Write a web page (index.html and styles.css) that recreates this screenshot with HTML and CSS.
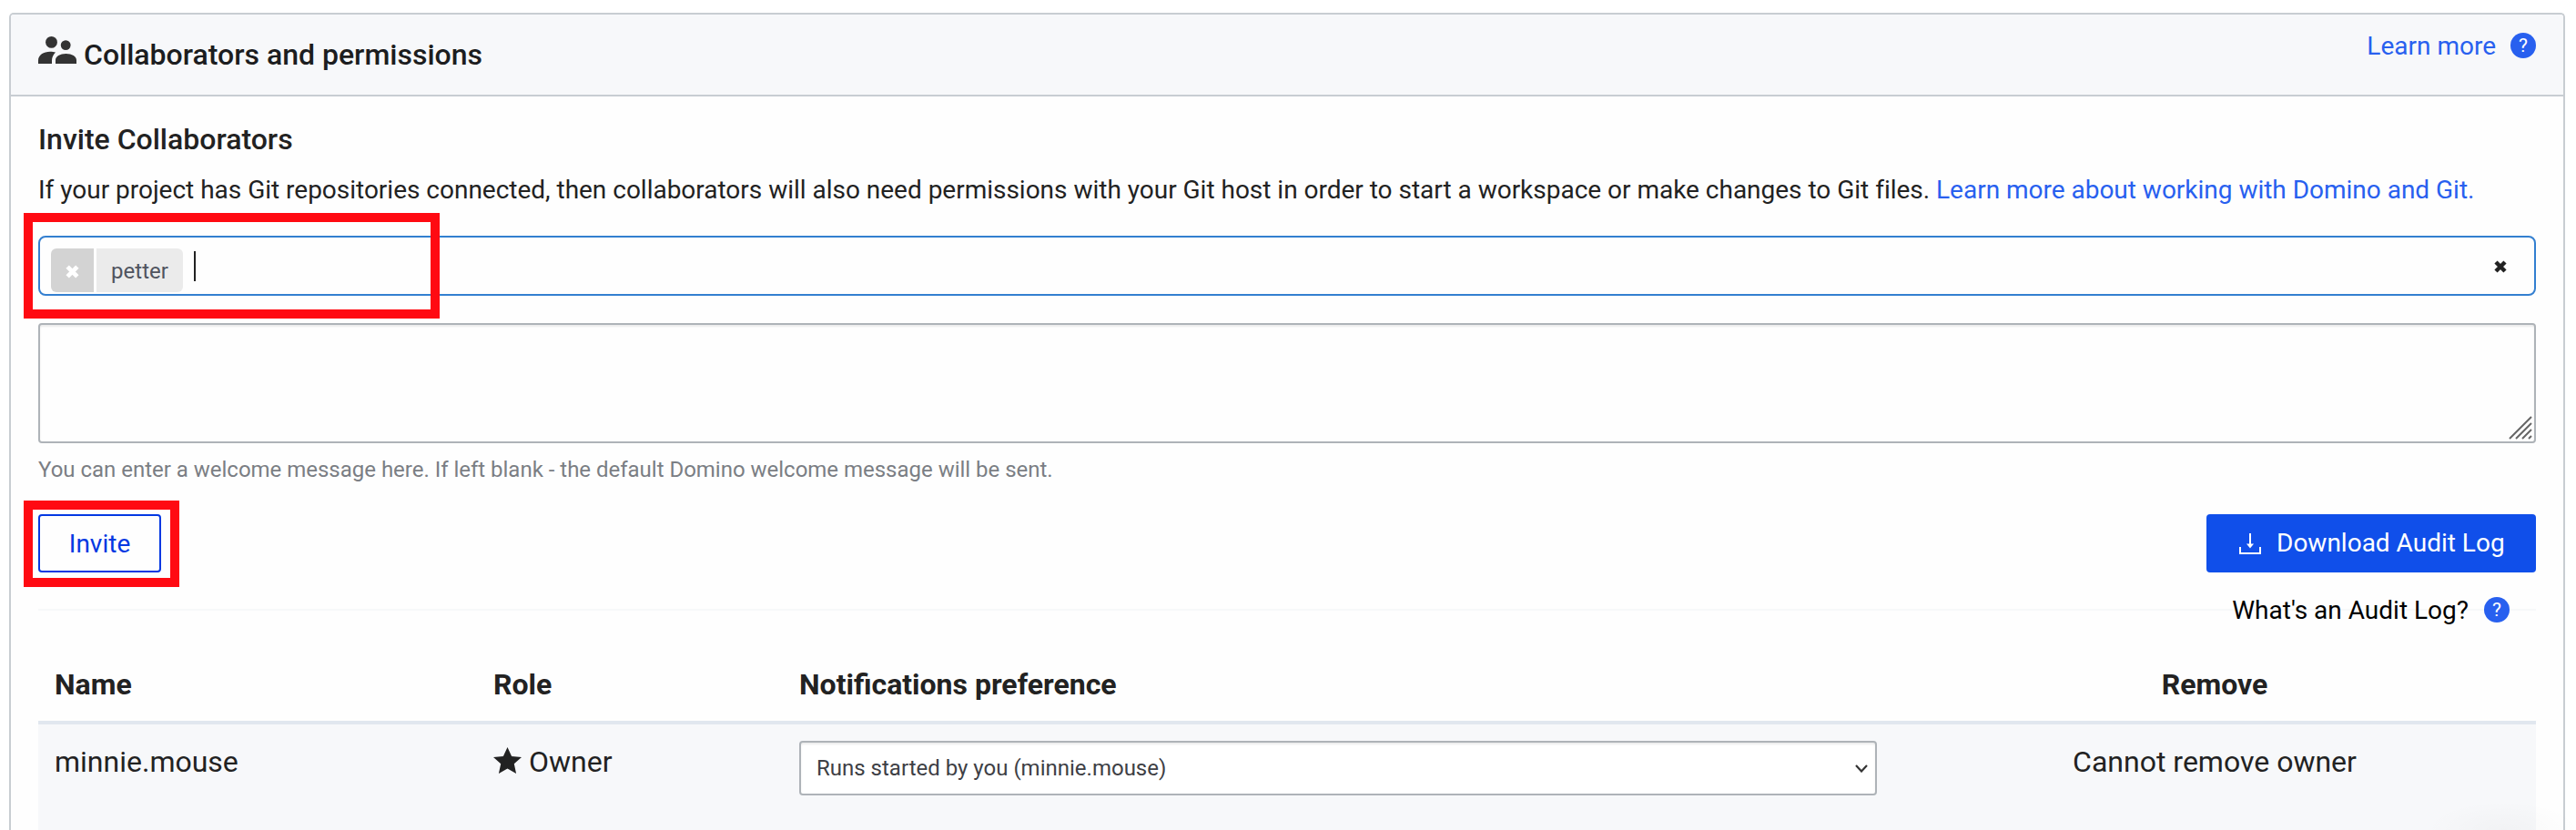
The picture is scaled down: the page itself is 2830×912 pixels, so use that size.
FILE: index.html
```html
<!DOCTYPE html>
<html lang="en">
<head>
<meta charset="utf-8">
<title>Collaborators and permissions</title>
<link rel="stylesheet" href="styles.css">
</head>
<body>
<section class="panel">
  <header class="panel-header">
    <div class="panel-title">
      <svg class="people" viewBox="0 0 42 30" width="42" height="30"><circle cx="14.5" cy="6.4" r="6.4"/><circle cx="30.2" cy="9.6" r="5.4"/><path d="M0 30v-3.500C0 20.500 6 16.800 13 16.800c2.200 0 4.400.3 6 .7-2.500 2.600-4 5.600-4 9.100V30zM19 30v-4c0-4 5-7 11.500-7S42 22 42 26v4z"/></svg>
      <h2 class="title-text">Collaborators and permissions</h2>
    </div>
    <a class="learn"><span>Learn more</span><span class="help">?</span></a>
  </header>
  <div class="panel-body">
    <h3 class="subtitle">Invite Collaborators</h3>
    <p class="intro">If your project has Git repositories connected, then collaborators will also need permissions with your Git host in order to start a workspace or make changes to Git files. <a class="link">Learn more about working with Domino and Git.</a></p>
    <div class="token-input">
      <span class="tag-remove"><svg viewBox="0 0 14 14" width="15" height="15"><path d="M2 2l10 10M12 2L2 12"/></svg></span>
      <span class="tag">petter</span>
      <span class="caret"></span>
      <svg class="clear" viewBox="0 0 14 14" width="14" height="14"><path d="M2 2l10 10M12 2L2 12"/></svg>
      <span class="mark mark-input"></span>
    </div>
    <div class="message-box"><svg viewBox="0 0 26 26" width="26" height="26"><path d="M1 25L25 1M8 25L25 8M15 25L25 15M22 25l3-3"/></svg></div>
    <p class="hint">You can enter a welcome message here. If left blank - the default Domino welcome message will be sent.</p>
    <div class="actions">
      <div class="invite">Invite<span class="mark mark-invite"></span></div>
      <div class="download"><svg viewBox="0 0 24 23" width="24" height="23"><path class="tray" d="M1 15v7h22v-7"/><path class="tray" d="M12 0v13"/><path class="tip" d="M8 11.500h8L12 16.500z"/></svg><span>Download Audit Log</span></div>
    </div>
    <div class="audit"><span>What's an Audit Log?</span><span class="help">?</span></div>
    <div class="table">
      <div class="row head"><span>Name</span><span>Role</span><span>Notifications preference</span><span class="center">Remove</span></div>
      <div class="row item">
        <span>minnie.mouse</span>
        <span class="role"><svg viewBox="0 0 31 29" width="31" height="29"><path d="M15.500 0l4.600 9.900 10.900 1.200-8.200 7.200L25.100 29l-9.600-5.500L5.900 29l2.300-10.700L0 11.100l10.900-1.200z"/></svg>Owner</span>
        <span class="select"><span>Runs started by you (minnie.mouse)</span><svg viewBox="0 0 14 9" width="14" height="9"><path d="M1 1l6 6.500L13 1"/></svg></span>
        <span class="center">Cannot remove owner</span>
      </div>
    </div>
  </div>
</section>
<div class="corner-shadow"></div>
</body>
</html>
```
FILE: styles.css
```css
* { box-sizing: border-box; }
html { height: 912px; overflow: hidden; }
body { position: relative; margin: 0; padding: 14px 12px 0 10px; height: 912px; overflow: hidden; background: #fff; color: #222; font: 400 28px/32px Roboto, sans-serif; }
h2, h3, p { margin: 0; }
.panel { height: 898px; overflow: hidden; border: 2px solid #c8cdd2; border-bottom: 0; border-radius: 5px 5px 0 0; background: #fefefe; }
.panel-header { display: flex; justify-content: space-between; height: 90px; padding: 20px 30px 0; background: #f7f8fa; border-bottom: 2px solid #c8cdd2; }
.panel-title { display: flex; gap: 8px; padding-top: 4px; }
.people { fill: #333; }
.title-text { padding-top: 1px; font-size: 32px; line-height: 38px; font-weight: 500; color: #1c1d20; white-space: nowrap; }
.learn { display: flex; gap: 16px; height: 28px; line-height: 30px; color: #2860ef; }
.help { display: block; flex: none; width: 28px; height: 28px; border-radius: 50%; background: #2860ef; color: #fff; font-size: 21px; line-height: 29px; text-align: center; }
.panel-body { padding: 28px 30px 0; }
.subtitle { font-size: 32px; line-height: 38px; font-weight: 500; }
.intro { padding-top: 21px; height: 87px; line-height: 32px; letter-spacing: -0.014px; white-space: nowrap; }
.link { color: #2860ef; }
.token-input { position: relative; display: flex; align-items: flex-start; height: 66px; padding: 12px; border: 2px solid #337fd0; border-radius: 8px; }
.tag-remove { display: flex; align-items: center; justify-content: center; width: 47px; height: 48px; padding-top: 2px; margin-right: 3px; border-radius: 6px 0 0 6px; background: #d3d3d3; }
.tag-remove path, .clear path { fill: none; stroke: #fff; stroke-width: 4.500; }
.tag { width: 95px; height: 48px; border-radius: 0 6px 6px 0; background: #ebebeb; color: #50545f; text-align: center; font-size: 24px; line-height: 50px; }
.caret { width: 2px; height: 33px; margin: 3px 0 0 12px; background: #222; }
.clear { margin: 13px 18px 0 auto; }
.clear path { stroke: #222; }
.mark { position: absolute; border: 10px solid #ff0a12; }
.mark-input { left: -18px; top: -27px; width: 457px; height: 116px; }
.mark-invite { left: -18px; top: -17px; width: 171px; height: 95px; }
.message-box { display: flex; align-items: flex-end; justify-content: flex-end; margin-top: 30px; height: 132px; padding: 2px; border: 2px solid #aeb3b8; border-radius: 4px; box-shadow: inset 0 2px 2px rgba(0,0,0,.075); }
.message-box path { fill: none; stroke: #666; stroke-width: 2; }
.hint { padding-top: 14px; height: 78px; font-size: 24px; line-height: 30px; letter-spacing: -0.014px; color: #7b7e84; white-space: nowrap; }
.actions { display: flex; justify-content: space-between; height: 64px; }
.invite { position: relative; width: 135px; border: 2px solid #0338e2; border-radius: 4px; color: #0338e2; line-height: 61px; text-align: center; }
.download { display: flex; align-items: center; gap: 17px; width: 362px; padding-left: 36px; border-radius: 4px; background: #104fea; color: #fff; white-space: nowrap; }
.download span { padding-bottom: 1px; }
.tray { fill: none; stroke: #fff; stroke-width: 2; }
.tip { fill: #fff; }
.audit { display: flex; justify-content: flex-end; gap: 17px; height: 83px; padding: 27px 29px 0 0; line-height: 30px; color: #000; background: linear-gradient(#f7f8f9, #f7f8f9) 0 40px / 100% 2px no-repeat; }
.row { display: grid; grid-template-columns: 482px 336px 1184px 1fr; padding-left: 18px; font-size: 32px; line-height: 38px; }
.head { height: 84px; padding-top: 21px; border-bottom: 4px solid #e1e7ef; font-weight: 700; }
.item { height: 116px; padding-top: 18px; background: #f7f8fa; align-items: start; }
.item > span { padding-top: 4px; }
.center { text-align: center; padding-left: 18px; }
.role { display: flex; gap: 8px; }
.role svg { margin-top: 3px; fill: #222; }
.item > .select { display: flex; align-items: center; justify-content: space-between; height: 60px; padding: 0 8px 0 17px; border: 2px solid #aeb3b8; border-radius: 4px; background: #fff; box-shadow: inset 0 2px 2px rgba(0,0,0,.075); color: #3e4045; font-size: 24px; }
.select path { fill: none; stroke: #333; stroke-width: 2.200; }
.corner-shadow { position: absolute; right: 0; bottom: 0; width: 160px; height: 34px; background: radial-gradient(ellipse 85px 32px at 80px 34px, rgba(0,0,0,.022), transparent); }
```
